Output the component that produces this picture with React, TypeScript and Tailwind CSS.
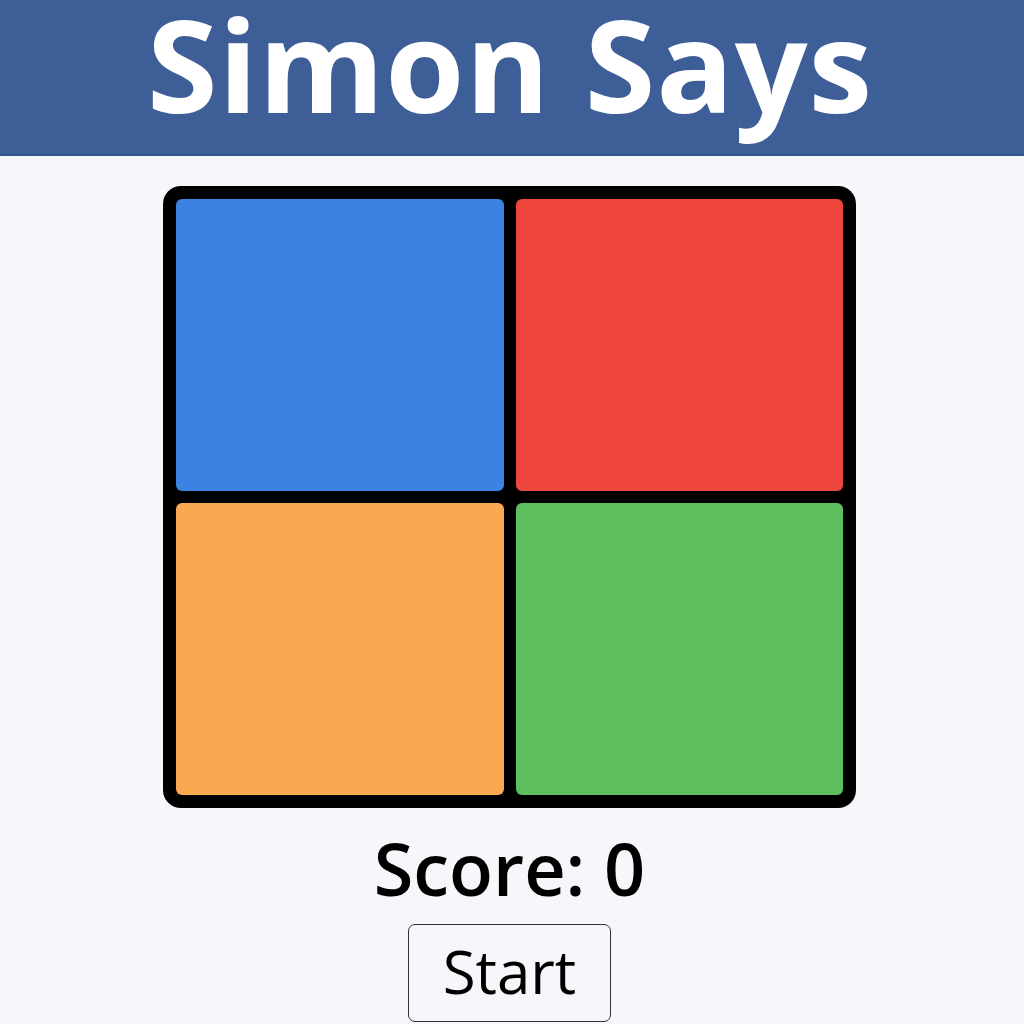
export default function App() {
  return (
    <div className="min-h-[1024px] w-[1024px] bg-[#f5f7fa] flex flex-col items-center overflow-hidden" style={{ fontFamily: '"Open Sans", "Noto Sans", sans-serif' }}>
      <header className="w-full h-[156px] bg-[#3d5e96] border-b-2 border-[#35558a] flex items-start justify-center">
        <h1 className="text-white font-bold text-[128px] leading-[128px] tracking-[1px] mr-[4px]">Simon Says</h1>
      </header>
      <div className="mt-[30px] mr-[5px] w-[693px] h-[622px] bg-black rounded-[18px] p-[13px] grid grid-cols-2 grid-rows-2 gap-[12px]">
        <div className="bg-[#3c82e3] rounded-[6px]" />
        <div className="bg-[#ee463c] rounded-[6px]" />
        <div className="bg-[#f9aa50] rounded-[6px]" />
        <div className="bg-[#5dbf5e] rounded-[6px]" />
      </div>
      <div className="mt-[18px] mr-[5px] text-[72px] leading-none font-semibold text-black h-[84px] flex items-center">Score: 0</div>
      <button className="mt-[14px] mr-[5px] w-[203px] h-[98px] border border-[#333] rounded-[7px] bg-[#f5f7fa] text-[60px] font-normal text-black flex items-center justify-center leading-none pb-[4px]">Start</button>
    </div>
  );
}
